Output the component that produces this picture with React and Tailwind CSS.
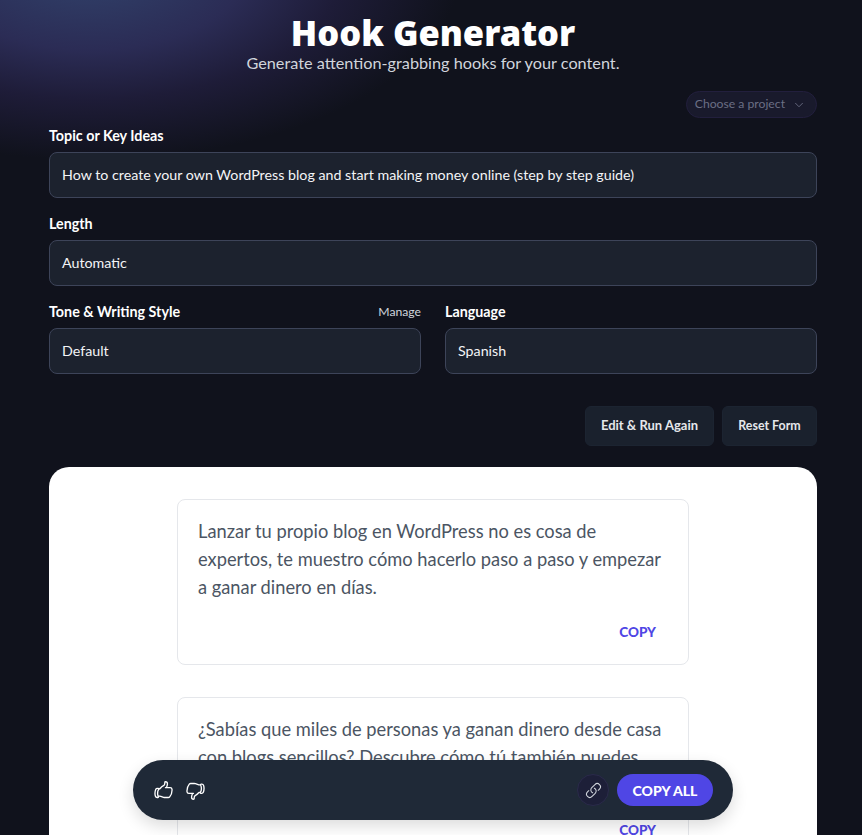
import { HiOutlineHandThumbUp, HiOutlineHandThumbDown, HiOutlineLink } from "react-icons/hi2";
import { ChevronDown } from "lucide-react";

function Field({ label, value, right }) {
  return (
    <div className="flex-1 min-w-0">
      <div className="flex items-center justify-between h-[20px] mb-[6px]">
        <label className="text-[14.3px] font-bold leading-[20px] text-white">{label}</label>
        {right && <span className="text-[12.2px] leading-[20px] text-gray-300">{right}</span>}
      </div>
      <div className="h-[46px] flex items-center px-[12px] rounded-lg border border-[#3d4459] bg-[#1c222e] text-[14.25px] text-gray-100">
        {value}
      </div>
    </div>
  );
}

function HookCard({ text }) {
  return (
    <div className="w-[512px] h-[166px] shrink-0 rounded-lg border border-gray-200 bg-white pl-[20px] pr-[20px] pt-[17px] flex flex-col">
      <p className="text-[18.3px] leading-[28px] text-[#4b5563]">{text}</p>
      <div className="mt-auto mb-[22px] pr-[12px] text-right text-[13.5px] font-black leading-[20px] text-[#4f46e5]">COPY</div>
    </div>
  );
}

export default function App() {
  return (
    <div className="relative h-[835px] w-full overflow-hidden bg-[#10121c] bg-[radial-gradient(ellipse_370px_190px_at_90px_-30px,#31426b_0%,#2b2c55_42%,#1e1c38_68%,#10121c_100%)] font-['Lato','Noto_Sans',sans-serif]">
      {/* Header */}
      <div className="ml-[49px] w-[768px] pt-[11px] text-center">
        <h1 className="font-['Noto_Sans',sans-serif] text-[34.5px] font-black leading-[44px] text-white">Hook Generator</h1>
        <p className="text-[16.25px] leading-[20px] -mt-[2px] text-gray-300">Generate attention-grabbing hooks for your content.</p>
      </div>

      <div className="ml-[49px] w-[768px]">
        {/* Project select */}
        <div className="mt-[18px] flex justify-end">
          <div className="flex h-[27px] items-center gap-[7px] rounded-full border border-[#221f3d] bg-[#191a2c] pl-[8px] pr-[10px] text-[12.2px] text-[#6b6f85]">
            Choose a project
            <ChevronDown size={14} strokeWidth={1.5} />
          </div>
        </div>

        {/* Form */}
        <div className="mt-[8px] flex flex-col gap-[16px]">
          <Field label="Topic or Key Ideas" value="How to create your own WordPress blog and start making money online (step by step guide)" />
          <Field label="Length" value="Automatic" />
          <div className="flex gap-[24px]">
            <Field label="Tone & Writing Style" value="Default" right="Manage" />
            <Field label="Language" value="Spanish" />
          </div>
        </div>

        {/* Actions */}
        <div className="mt-[32px] flex justify-end gap-[8px]">
          <button className="h-[40px] w-[129px] rounded-md border border-[#1c2431] bg-[#1a212d] text-[13px] font-bold text-gray-200">Edit &amp; Run Again</button>
          <button className="h-[40px] w-[95px] rounded-md border border-[#1c2431] bg-[#1a212d] text-[12.4px] font-bold text-gray-200">Reset Form</button>
        </div>

        {/* Results */}
        <div className="mt-[21px] flex h-[500px] flex-col items-center gap-[32px] rounded-t-[20px] bg-white pt-[32px]">
          <HookCard text="Lanzar tu propio blog en WordPress no es cosa de expertos, te muestro cómo hacerlo paso a paso y empezar a ganar dinero en días." />
          <HookCard text="¿Sabías que miles de personas ya ganan dinero desde casa con blogs sencillos? Descubre cómo tú también puedes lograrlo hoy." />
        </div>
      </div>

      {/* Floating toolbar */}
      <div className="absolute bottom-[15px] left-[133px] flex h-[60px] w-[600px] items-center justify-between rounded-full bg-[#1f2937] pl-[20px] pr-[20px] shadow-[0_6px_16px_rgba(0,0,0,0.14)]">
        <div className="flex items-center gap-[11px] text-white">
          <HiOutlineHandThumbUp size={21} />
          <HiOutlineHandThumbDown size={21} />
        </div>
        <div className="flex items-center gap-[8px]">
          <div className="flex h-[32px] w-[32px] items-center justify-center rounded-full border border-[#2a2a4a] bg-[#1d1f38] text-gray-300">
            <HiOutlineLink size={17} />
          </div>
          <button className="h-[32px] w-[96px] rounded-full bg-[#4f46e5] text-[14px] font-black text-white">COPY ALL</button>
        </div>
      </div>
    </div>
  );
}
